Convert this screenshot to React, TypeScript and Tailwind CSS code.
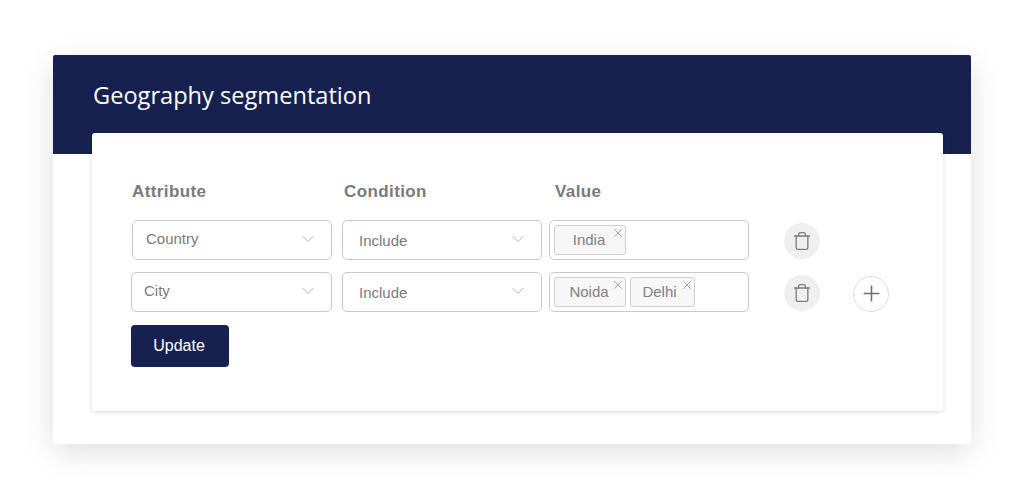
import { ChevronDown, Plus, Trash, X } from 'lucide-react'

const sans = 'font-["Liberation_Sans",Arial,sans-serif]'

function Select({ label, className = '', textClass = '' }: { label: string; className?: string; textClass?: string }) {
  return (
    <div className={`flex h-10 w-[200px] items-center justify-between rounded-[5px] border border-[#c9c9c9] bg-white pr-[13px] ${className}`}>
      <span className={`text-[15px] text-[#7a7a7a] ${textClass}`}>{label}</span>
      <ChevronDown size={20} strokeWidth={1.1} className="mb-[3px] text-[#a8a8a8]" />
    </div>
  )
}

function Tag({ label, className = '' }: { label: string; className?: string }) {
  return (
    <div className={`relative flex h-[30px] items-center justify-center rounded-[3px] border border-[#cfcfcf] bg-[#f7f7f7] text-[15px] text-[#808080] ${className}`}>
      <span>{label}</span>
      <X size={14} strokeWidth={1.1} className="absolute right-0 top-0 text-[#777777]" />
    </div>
  )
}

function Round({ add }: { add?: boolean }) {
  if (add) {
    return (
      <button className="mt-[3px] flex h-9 w-9 items-center justify-center rounded-full border border-[#dddddd] bg-white text-[#6f6f6f]">
        <Plus size={25} strokeWidth={1.5} />
      </button>
    )
  }
  return (
    <button className="mt-[2px] flex h-9 w-9 items-center justify-center rounded-full bg-[#efefef] text-[#7d7d7d]">
      <Trash size={20} strokeWidth={1.6} />
    </button>
  )
}

export default function App() {
  return (
    <div className={`h-[500px] w-[1024px] overflow-hidden bg-white pl-[53px] pt-[55px] ${sans}`}>
      <div className="h-[389px] w-[918px] rounded-t-[2px] bg-white shadow-[0_8px_30px_rgba(0,0,0,0.13)]">
        {/* Header */}
        <div className="h-[99px] rounded-t-[2px] bg-[#16214f] pl-[40px] pt-[22px]">
          <h1 className='font-["Open_Sans",sans-serif] text-[23.6px] leading-[36px] text-white'>Geography segmentation</h1>
        </div>

        {/* Form card */}
        <div className="relative ml-[39px] mt-[-21px] h-[278px] w-[851px] rounded-[3px] bg-white pl-[39px] pt-[48px] shadow-[0_1px_4px_rgba(0,0,0,0.16)]">
          <div className="flex text-[17px] font-bold leading-[22px] tracking-[0.4px] text-[#7a7a7a]">
            <span className="ml-px w-[212px]">Attribute</span>
            <span className="w-[211px]">Condition</span>
            <span>Value</span>
          </div>

          <div className="mt-[17px] flex items-center">
            <Select label="Country" className="ml-px pl-[13px]" textClass="pb-[2px]" />
            <Select label="Include" className="ml-[10px] pl-4" textClass="pt-[2px]" />
            <div className="ml-[7px] flex h-10 w-[200px] items-center rounded-[5px] border border-[#c9c9c9] bg-white pl-1">
              <Tag label="India" className="w-[72px] pr-[2px]" />
            </div>
            <div className="ml-[35px]">
              <Round />
            </div>
          </div>

          <div className="mt-3 flex items-center">
            <Select label="City" className="w-[201px] pl-[12px]" textClass="pb-[2px]" />
            <Select label="Include" className="ml-[10px] pl-4" textClass="pt-[2px]" />
            <div className="ml-[7px] flex h-10 w-[200px] items-center gap-[4px] rounded-[5px] border border-[#c9c9c9] bg-white pl-1">
              <Tag label="Noida" className="w-[72px] pr-[2px]" />
              <Tag label="Delhi" className="w-[65px] pr-[6px]" />
            </div>
            <div className="ml-[35px]">
              <Round />
            </div>
            <div className="ml-[33px]">
              <Round add />
            </div>
          </div>

          <button className="mt-[13px] flex h-[42px] w-[98px] items-center justify-center rounded-[4px] bg-[#16214f] pr-[2px] text-[16px] text-white">
            Update
          </button>
        </div>
      </div>
    </div>
  )
}
